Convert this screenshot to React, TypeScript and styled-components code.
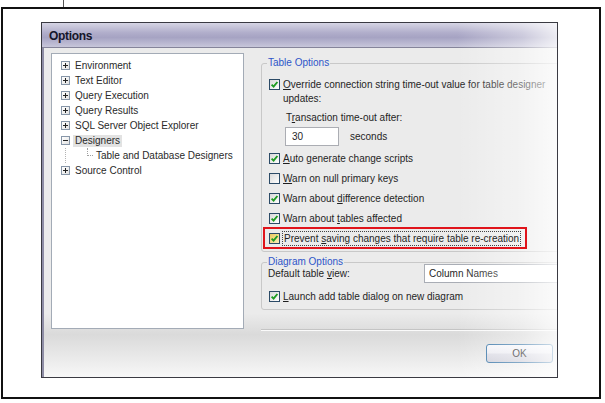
import React from 'react';
import styled, { createGlobalStyle } from 'styled-components';

const GlobalStyle = createGlobalStyle`
    html, body {
        margin: 0;
        padding: 0;
        background: #fff;
    }
    body {
        font-family: "Liberation Sans", Arial, sans-serif;
        font-size: 10px;
        color: #1f1f1f;
    }
`;

const Page = styled.div`
    width: 605px;
    height: 403px;
    overflow: hidden;
`;

const Tick = styled.div`
    height: 7px;
    margin-left: 63px;
    border-left: 1px solid #555;
`;

const Frame = styled.div`
    margin-left: 1px;
    width: 600px;
    height: 392px;
    box-sizing: border-box;
    border: 2px solid #111;
    padding: 13px 0 0 38px;
`;

const Dialog = styled.div`
    position: relative;
    width: 517px;
    height: 356px;
    box-sizing: border-box;
    border: 1px solid #3a3a42;
    box-shadow: inset 2px 0 0 #8e8da5;
    overflow: hidden;
    display: flex;
    flex-direction: column;
    background: linear-gradient(to bottom, #ebebeb 0%, #ebebeb 82%, #dadada 88%, #f7f7f7 100%);
`;

const Fade = styled.div`
    position: absolute;
    top: 0;
    right: 0;
    bottom: 0;
    width: 100px;
    pointer-events: none;
    z-index: 1;
    background: linear-gradient(to right, rgba(255,255,255,0) 0%, rgba(255,255,255,0.4) 65%, rgba(255,255,255,0.78) 100%);
`;

const TitleBar = styled.div`
    height: 25px;
    display: flex;
    align-items: center;
    padding: 2px 0 0 7px;
    box-sizing: border-box;
    border-bottom: 1px solid #85849a;
    background: linear-gradient(to bottom, #d6d5e4 0%, #b1aecb 40%, #a6a3c3 60%, #c7c6da 100%);
`;

const Title = styled.span`
    font-size: 12px;
    font-weight: bold;
    letter-spacing: -0.3px;
    color: #15152a;
`;

const Body = styled.div`
    flex: 1;
    display: flex;
    flex-direction: column;
    padding: 5px 0 0 9px;
`;

const Main = styled.div`
    display: flex;
    gap: 17px;
`;

const Tree = styled.div`
    width: 193px;
    height: 276px;
    box-sizing: border-box;
    flex-shrink: 0;
    border: 1px solid #a3abb6;
    background: #fff;
    padding-top: 4px;
`;

const TreeRow = styled.div`
    display: flex;
    align-items: center;
    height: 15px;
`;

const ExpandBox = styled.span`
    width: 7px;
    height: 7px;
    margin-left: 9px;
    margin-right: 5px;
    border: 1px solid #8796a8;
    background: linear-gradient(135deg, #fff, #e2e2e2);
    display: flex;
    align-items: center;
    justify-content: center;
    flex-shrink: 0;
`;

const Guide = styled.span`
    align-self: stretch;
    margin-left: 13px;
    border-left: 1px dotted #b4b4b4;
`;

const Elbow = styled.span`
    align-self: flex-start;
    width: 5px;
    height: 7px;
    margin-left: 21px;
    border-left: 1px dotted #a0a0a0;
    border-bottom: 1px dotted #a0a0a0;
`;

const TreeLabel = styled.span<{ $selected?: boolean; $indent?: number }>`
    line-height: 12px;
    padding: 0 2px;
    margin-left: ${p => (p.$indent ?? 0) - 2}px;
    white-space: nowrap;
    color: #2a2a2a;
    background: ${p => (p.$selected ? '#e2e2e2' : 'transparent')};
`;

const RightColumn = styled.div`
    flex: 1;
    min-width: 0;
    margin-top: 4px;
    display: flex;
    flex-direction: column;
`;

const Group = styled.fieldset<{ $top?: number }>`
    margin: ${p => p.$top ?? 0}px -30px 0 0;
    padding: 0 0 3px 7px;
    border: 1px solid #c8c8c8;
    border-radius: 3px;
    min-width: 0;
`;

const Legend = styled.legend`
    color: #2d55c9;
    line-height: 12px;
    padding: 0 1px;
    margin-left: -2px;
`;

const CheckRow = styled.div`
    display: flex;
    align-items: center;
    height: 20px;
    white-space: nowrap;
`;

const WrapRow = styled.div`
    display: flex;
    align-items: flex-start;
    margin-top: 9px;
    line-height: 14px;
    white-space: nowrap;
`;

const Highlight = styled.div`
    position: relative;
    z-index: 2;
    display: flex;
    align-items: center;
    width: 264px;
    height: 22px;
    box-sizing: border-box;
    margin: -1px 0 -1px -6px;
    padding-left: 4px;
    border: 2px solid #e0141b;
    white-space: nowrap;
`;

const Box = styled.span<{ $hot?: boolean }>`
    width: 11px;
    height: 11px;
    box-sizing: border-box;
    flex-shrink: 0;
    margin-right: 3px;
    border: 1px solid #2b4a66;
    background: ${p =>
        p.$hot
            ? 'linear-gradient(135deg, #e9c85c, #fbeeb8)'
            : 'linear-gradient(135deg, #d8d8d8, #ffffff)'};
    display: flex;
    align-items: center;
    justify-content: center;
`;

const TopBox = styled(Box)`
    margin-top: 1px;
`;

const U = styled.span`
    text-decoration: underline;
`;

const Focus = styled.span`
    outline: 1px dotted #444;
    padding: 0 1px;
    line-height: 13px;
`;

const SubLabel = styled.div`
    margin: 5px 0 0 17px;
    line-height: 14px;
`;

const TimeoutRow = styled.div`
    display: flex;
    align-items: center;
    margin: 2px 0 2px 16px;
`;

const NumberBox = styled.div`
    width: 54px;
    height: 19px;
    box-sizing: border-box;
    border: 1px solid #abadb3;
    background: #fff;
    padding-left: 6px;
    display: flex;
    align-items: center;
`;

const Unit = styled.span`
    margin-left: 11px;
`;

const ViewRow = styled.div`
    display: flex;
    align-items: center;
    height: 19px;
    margin: -4px 0 3px -1px;
`;

const ViewLabel = styled.span`
    width: 156px;
    flex-shrink: 0;
`;

const SelectBox = styled.div`
    width: 170px;
    height: 19px;
    box-sizing: border-box;
    border: 1px solid #a9adb5;
    background: #fff;
    padding-left: 4px;
    display: flex;
    align-items: center;
`;

const Separator = styled.div`
    margin: 19px -30px 0 0;
    border-top: 1px solid #c4c4c4;
    border-bottom: 1px solid #fafafa;
`;

const Footer = styled.div`
    display: flex;
    justify-content: flex-end;
    padding: 13px 4px 0 0;
`;

const OkButton = styled.button`
    width: 67px;
    height: 19px;
    border: 1px solid #3b77a8;
    border-radius: 3px;
    font-family: inherit;
    font-size: 10px;
    color: #151515;
    padding: 0;
    background: linear-gradient(to bottom, #f6f6fa 0%, #ececf2 45%, #dcdce5 55%, #d0d0da 100%);
`;

function Expander({ open }: { open?: boolean }) {
    return (
        <ExpandBox>
            <svg width="5" height="5" viewBox="0 0 5 5">
                <path d="M0 2.5H5" stroke="#222" strokeWidth="1" />
                {!open && <path d="M2.5 0V5" stroke="#222" strokeWidth="1" />}
            </svg>
        </ExpandBox>
    );
}

function Check({ checked, hot, top }: { checked?: boolean; hot?: boolean; top?: boolean }) {
    const Comp = top ? TopBox : Box;
    return (
        <Comp $hot={hot}>
            {checked && (
                <svg width="9" height="9" viewBox="0 0 9 9">
                    <path d="M1.6 4.6 L3.6 6.6 L7.4 2" fill="none" stroke="#1e9b22" strokeWidth="1.9" />
                </svg>
            )}
        </Comp>
    );
}

const treeItems = ['Environment', 'Text Editor', 'Query Execution', 'Query Results', 'SQL Server Object Explorer'];

export default function App() {
    return (
        <Page>
            <GlobalStyle />
            <Tick />
            <Frame>
                <Dialog>
                    <TitleBar>
                        <Title>Options</Title>
                    </TitleBar>
                    <Body>
                        <Main>
                            <Tree>
                                {treeItems.map(item => (
                                    <TreeRow key={item}>
                                        <Expander />
                                        <TreeLabel>{item}</TreeLabel>
                                    </TreeRow>
                                ))}
                                <TreeRow>
                                    <Expander open />
                                    <TreeLabel $selected>Designers</TreeLabel>
                                </TreeRow>
                                <TreeRow>
                                    <Guide />
                                    <Elbow />
                                    <TreeLabel $indent={3}>Table and Database Designers</TreeLabel>
                                </TreeRow>
                                <TreeRow>
                                    <Expander />
                                    <TreeLabel>Source Control</TreeLabel>
                                </TreeRow>
                            </Tree>

                            <RightColumn>
                                <Group>
                                    <Legend>Table Options</Legend>
                                    <WrapRow>
                                        <Check checked top />
                                        <span>
                                            <U>O</U>verride connection string time-out value for table designer
                                            <br />
                                            updates:
                                        </span>
                                    </WrapRow>
                                    <SubLabel>
                                        T<U>r</U>ansaction time-out after:
                                    </SubLabel>
                                    <TimeoutRow>
                                        <NumberBox>30</NumberBox>
                                        <Unit>seconds</Unit>
                                    </TimeoutRow>
                                    <CheckRow>
                                        <Check checked />
                                        <span><U>A</U>uto generate change scripts</span>
                                    </CheckRow>
                                    <CheckRow>
                                        <Check />
                                        <span><U>W</U>arn on null primary keys</span>
                                    </CheckRow>
                                    <CheckRow>
                                        <Check checked />
                                        <span>Warn about <U>d</U>ifference detection</span>
                                    </CheckRow>
                                    <CheckRow>
                                        <Check checked />
                                        <span>Warn about <U>t</U>ables affected</span>
                                    </CheckRow>
                                    <Highlight>
                                        <Check checked hot />
                                        <Focus>Prevent <U>s</U>aving changes that require table re-creation</Focus>
                                    </Highlight>
                                </Group>

                                <Group $top={4}>
                                    <Legend>Diagram Options</Legend>
                                    <ViewRow>
                                        <ViewLabel>Default table <U>v</U>iew:</ViewLabel>
                                        <SelectBox>Column Names</SelectBox>
                                    </ViewRow>
                                    <CheckRow>
                                        <Check checked />
                                        <span><U>L</U>aunch add table dialog on new diagram</span>
                                    </CheckRow>
                                </Group>

                                <Separator />
                            </RightColumn>
                        </Main>
                        <Footer>
                            <OkButton>OK</OkButton>
                        </Footer>
                    </Body>
                    <Fade />
                </Dialog>
            </Frame>
        </Page>
    );
}
